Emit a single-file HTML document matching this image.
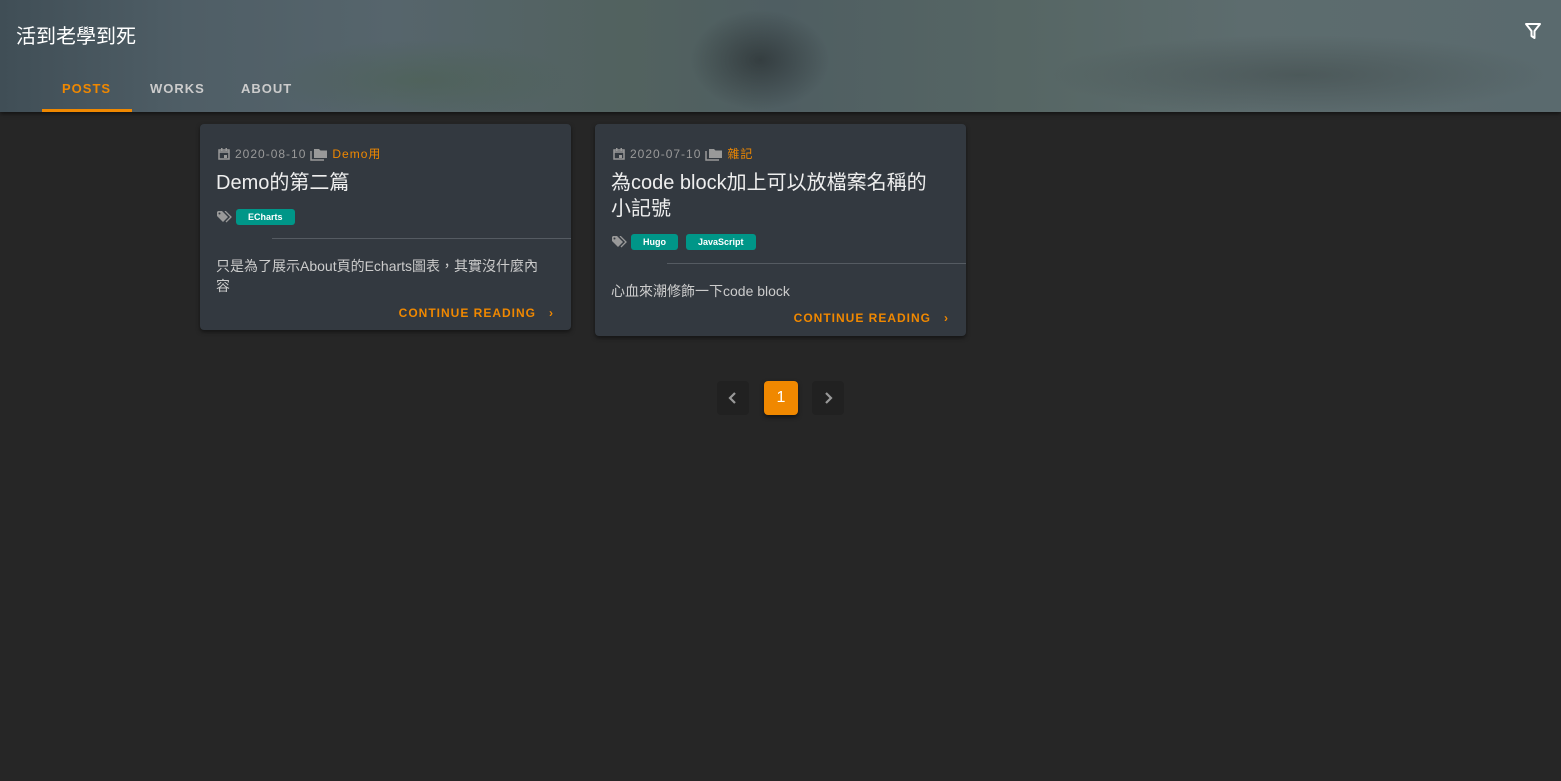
<!DOCTYPE html>
<html><head><meta charset="utf-8"><style>
*{margin:0;padding:0;box-sizing:border-box}
body{width:1561px;height:781px;background:#262626;font-family:"Liberation Sans","Noto Sans CJK TC",sans-serif;position:relative;overflow:hidden}
.hdr{position:absolute;left:0;top:0;width:1561px;height:112px;background:
radial-gradient(ellipse 70px 50px at 760px 60px,rgba(35,40,42,.6),transparent),
radial-gradient(ellipse 250px 40px at 1300px 75px,rgba(60,70,70,.5),transparent),
radial-gradient(ellipse 150px 40px at 420px 80px,rgba(70,95,70,.4),transparent),
linear-gradient(90deg,#404e56 0%,#4f5e66 12%,#56656c 25%,#52625f 40%,#4f5e62 50%,#566664 65%,#5d6c6e 80%,#5a6a6e 100%);box-shadow:0 2px 4px rgba(0,0,0,.5)}
.title{position:absolute;left:16px;top:20px;color:#fff;font-size:20px}
.nav{position:absolute;top:81px;font-size:13px;font-weight:bold;letter-spacing:1px;color:#ccc}
.ind{position:absolute;left:42px;top:109px;width:90px;height:3px;background:#f08800}
.card{position:absolute;top:124px;width:371px;background:#333940;border-radius:4px;box-shadow:0 2px 4px rgba(0,0,0,.5)}
.meta{position:absolute;font-size:12px;color:#999;letter-spacing:1px;display:flex;align-items:center;gap:4px}
.cat{color:#f08800}
.h{position:absolute;left:16px;color:#eee;font-size:20px;line-height:26px}
.tag{display:inline-block;background:#009688;color:#fff;font-size:9px;font-weight:bold;border-radius:3px;height:16px;line-height:16px;padding:0 12px;margin-right:4px;vertical-align:middle}
.hr{position:absolute;height:1px;background:#555b62}
.ex{position:absolute;left:16px;color:#ccc;font-size:14px;line-height:20px}
.cr{position:absolute;right:17px;color:#f08800;font-size:12px;font-weight:bold;letter-spacing:1px}
.pg{position:absolute;top:381px;width:32px;height:34px;border-radius:4px;background:#212121;display:flex;align-items:center;justify-content:center}
</style></head><body>
<div class="hdr"></div>
<div class="title">活到老學到死</div>
<svg style="position:absolute;left:1524px;top:22px" width="18" height="18" viewBox="0 0 18 18"><path d="M2 2h14l-5.5 7v7l-3-2v-5z" fill="none" stroke="#fff" stroke-width="2" stroke-linejoin="round"/></svg>
<div class="nav" style="left:62px;color:#f08800">POSTS</div>
<div class="nav" style="left:150px">WORKS</div>
<div class="nav" style="left:241px">ABOUT</div>
<div class="ind"></div>

<div class="card" style="left:200px;height:206px">
<div class="meta" style="left:17px;top:21px"><svg width="14" height="14" viewBox="0 0 14 14"><path d="M2 3h10v9H2z M2 3h10v2H2z" fill="none" stroke="#999" stroke-width="1.5"/><rect x="4" y="1" width="1.5" height="3" fill="#999"/><rect x="8.5" y="1" width="1.5" height="3" fill="#999"/><rect x="7" y="8" width="3" height="3" fill="#999"/></svg>2020-08-10 <svg width="18" height="14" viewBox="0 0 18 14"><path d="M1 4v9h13" fill="none" stroke="#999" stroke-width="1.5"/><path d="M4 2h5l1.5 1.5H17V11H4z" fill="#999"/></svg><span class="cat">Demo用</span></div>
<div class="h" style="top:46px">Demo的第二篇</div>
<div style="position:absolute;left:17px;top:85px;display:flex;align-items:center;gap:4px"><svg width="15" height="12" viewBox="0 0 15 12"><path d="M0 1v4l6 6 5-5-6-6H1z" fill="#999"/><path d="M8 0l6 6-5 5" fill="none" stroke="#999" stroke-width="1.3"/><circle cx="2.5" cy="2.5" r="1" fill="#333940"/></svg><span class="tag">ECharts</span></div>
<div class="hr" style="left:72px;right:0;top:114px"></div>
<div class="ex" style="top:132px">只是為了展示About頁的Echarts圖表，其實沒什麼內<br>容</div>
<div class="cr" style="top:182px">CONTINUE READING &nbsp;&nbsp;›</div>
</div>

<div class="card" style="left:595px;height:212px">
<div class="meta" style="left:17px;top:21px"><svg width="14" height="14" viewBox="0 0 14 14"><path d="M2 3h10v9H2z M2 3h10v2H2z" fill="none" stroke="#999" stroke-width="1.5"/><rect x="4" y="1" width="1.5" height="3" fill="#999"/><rect x="8.5" y="1" width="1.5" height="3" fill="#999"/><rect x="7" y="8" width="3" height="3" fill="#999"/></svg>2020-07-10 <svg width="18" height="14" viewBox="0 0 18 14"><path d="M1 4v9h13" fill="none" stroke="#999" stroke-width="1.5"/><path d="M4 2h5l1.5 1.5H17V11H4z" fill="#999"/></svg><span class="cat">雜記</span></div>
<div class="h" style="top:46px">為code block加上可以放檔案名稱的<br>小記號</div>
<div style="position:absolute;left:17px;top:110px;display:flex;align-items:center;gap:4px"><svg width="15" height="12" viewBox="0 0 15 12"><path d="M0 1v4l6 6 5-5-6-6H1z" fill="#999"/><path d="M8 0l6 6-5 5" fill="none" stroke="#999" stroke-width="1.3"/><circle cx="2.5" cy="2.5" r="1" fill="#333940"/></svg><span class="tag">Hugo</span><span class="tag">JavaScript</span></div>
<div class="hr" style="left:72px;right:0;top:139px"></div>
<div class="ex" style="top:157px">心血來潮修飾一下code block</div>
<div class="cr" style="top:187px">CONTINUE READING &nbsp;&nbsp;›</div>
</div>

<div class="pg" style="left:717px"><svg width="10" height="14" viewBox="0 0 10 14"><path d="M7 2L2 7l5 5" fill="none" stroke="#999" stroke-width="2.2"/></svg></div>
<div class="pg" style="left:764px;width:34px;background:#f08800;color:#fff;font-size:16px;box-shadow:0 2px 4px rgba(0,0,0,.5)">1</div>
<div class="pg" style="left:812px"><svg width="10" height="14" viewBox="0 0 10 14"><path d="M3 2l5 5-5 5" fill="none" stroke="#999" stroke-width="2.2"/></svg></div>
</body></html>
